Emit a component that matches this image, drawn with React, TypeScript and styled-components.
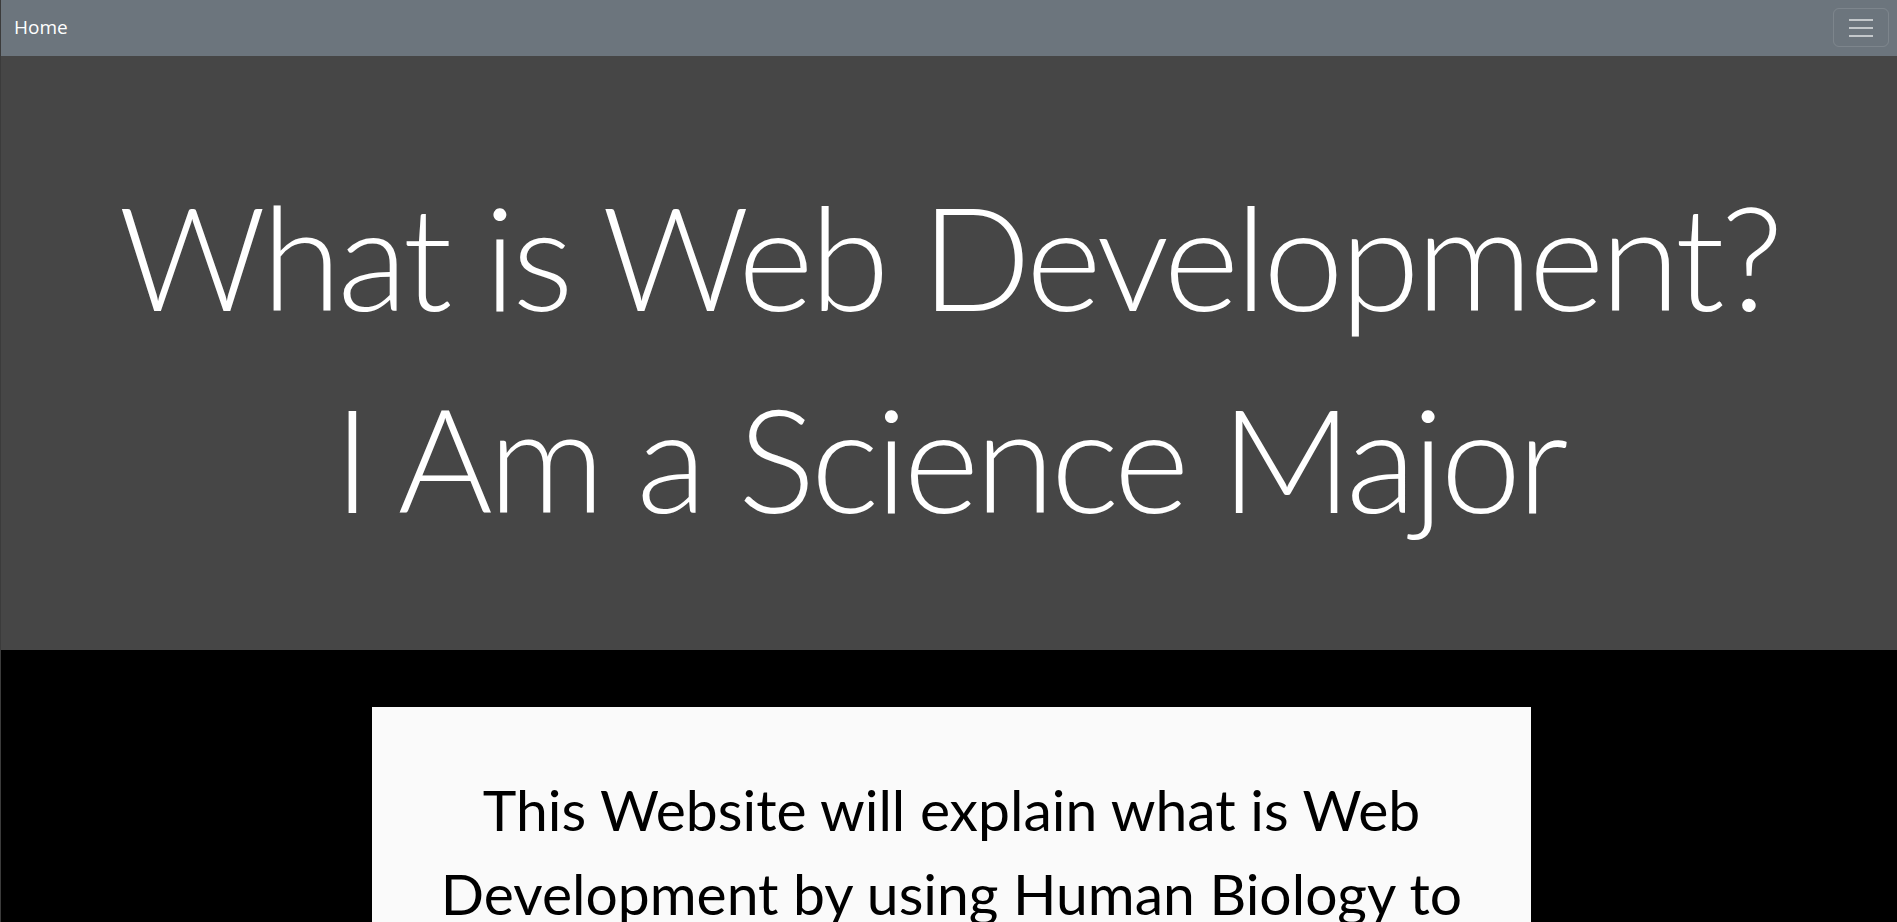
import React from "react";
import styled, { createGlobalStyle } from "styled-components";

const GlobalStyle = createGlobalStyle`
  html, body {
    margin: 0;
    padding: 0;
    background: #000;
  }
  body {
    font-family: "Open Sans", "Noto Sans", sans-serif;
    overflow: hidden;
  }
  * {
    box-sizing: border-box;
  }
`;

const Page = styled.div`
  min-height: 100vh;
  border-left: 1px solid #3b3b3b;
  background: #000;
`;

const NavBar = styled.nav`
  height: 56px;
  background: #6c757d;
  display: flex;
  align-items: center;
  justify-content: space-between;
  padding: 0 8px 0 13px;
`;

const Brand = styled.a`
  color: #fff;
  font-size: 19px;
  text-decoration: none;
  line-height: 1;
  margin-top: -2px;
`;

const Toggler = styled.button`
  width: 56px;
  height: 39px;
  margin-top: -1px;
  border: 1px solid rgba(255, 255, 255, 0.12);
  border-radius: 6px;
  background: transparent;
  display: flex;
  align-items: center;
  justify-content: center;
  padding: 0;
`;

const Hero = styled.header`
  background: #464646;
  padding: 98px 0 92px;
  text-align: center;
`;

const HeroLine = styled.h1`
  margin: 0;
  color: #fff;
  font-family: Lato, "Open Sans", sans-serif;
  font-weight: 300;
  font-size: 145px;
  line-height: 202px;
  letter-spacing: -4px;
  white-space: nowrap;
`;

const Content = styled.section`
  display: flex;
  justify-content: center;
  padding: 57px 0 0 5px;
`;

const Card = styled.div`
  width: 1159px;
  background: #fafafa;
  padding: 60px 30px 40px;
`;

const Intro = styled.p`
  margin: 0;
  color: #000;
  font-family: Lato, "Open Sans", sans-serif;
  font-weight: 400;
  font-size: 57px;
  line-height: 84px;
  text-align: center;
`;

const MenuIcon: React.FC = () => (
  <svg width="30" height="30" viewBox="0 0 30 30">
    <path
      d="M3 7h24M3 15h24M3 23h24"
      stroke="rgba(255,255,255,0.6)"
      strokeWidth="2"
      strokeLinecap="butt"
    />
  </svg>
);

export default function App() {
  return (
    <Page>
      <GlobalStyle />
      <NavBar>
        <Brand href="#">Home</Brand>
        <Toggler aria-label="Toggle navigation">
          <MenuIcon />
        </Toggler>
      </NavBar>
      <Hero>
        <HeroLine>What is Web Development?</HeroLine>
        <HeroLine>I Am a Science Major</HeroLine>
      </Hero>
      <Content>
        <Card>
          <Intro>
            This Website will explain what is Web Development by using Human
            Biology to show how the pieces of a website work together.
          </Intro>
        </Card>
      </Content>
    </Page>
  );
}
